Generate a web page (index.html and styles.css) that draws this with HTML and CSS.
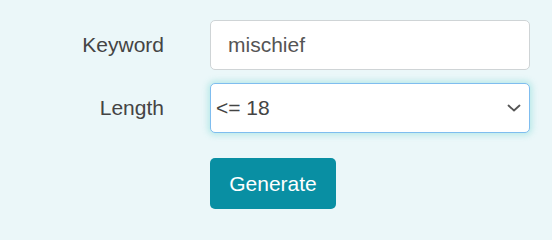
FILE: index.html
```html
<!DOCTYPE html>
<html>
<head>
<meta charset="utf-8">
<link rel="stylesheet" href="styles.css">
</head>
<body>
<form class="form">
  <label class="label" for="kw">Keyword</label>
  <div class="field">mischief</div>
  <label class="label" for="len">Length</label>
  <div class="field select">
    <span>&lt;= 18</span>
    <svg class="chev" width="14" height="8" viewBox="0 0 14 8"><path d="M1.5 1.5 L7 6.5 L12.5 1.5" fill="none" stroke="#555" stroke-width="1.8" stroke-linecap="round" stroke-linejoin="round"/></svg>
  </div>
  <div></div>
  <div class="actions"><button type="button" class="btn">Generate</button></div>
</form>
</body>
</html>
```
FILE: styles.css
```css
html, body {
  margin: 0;
  padding: 0;
  background: #ebf7f9;
  font-family: "Liberation Sans", Arial, sans-serif;
}
body {
  height: 217px;
  overflow: hidden;
}
.form {
  display: grid;
  grid-template-columns: 164px 320px;
  column-gap: 46px;
  row-gap: 13px;
  padding-top: 20px;
  align-items: center;
}
.label {
  text-align: right;
  font-size: 21px;
  color: #444;
}
.field {
  box-sizing: border-box;
  height: 50px;
  background: #fff;
  border: 1px solid #cfd4d6;
  border-radius: 5px;
  padding-left: 17px;
  display: flex;
  align-items: center;
  font-size: 21px;
  color: #555;
}
.select {
  padding-left: 5px;
  padding-right: 8px;
  justify-content: space-between;
  border-color: #7fbdef;
  box-shadow: 0 0 6px 2px rgba(120, 215, 210, 0.45);
  color: #444;
}
.chev {
  display: block;
}
.actions {
  padding-top: 12px;
}
.btn {
  box-sizing: border-box;
  height: 51px;
  width: 126px;
  border: none;
  border-radius: 5px;
  background: #098fa3;
  color: #fff;
  font-family: "Liberation Sans", Arial, sans-serif;
  font-size: 21px;
  padding: 0;
}
```
